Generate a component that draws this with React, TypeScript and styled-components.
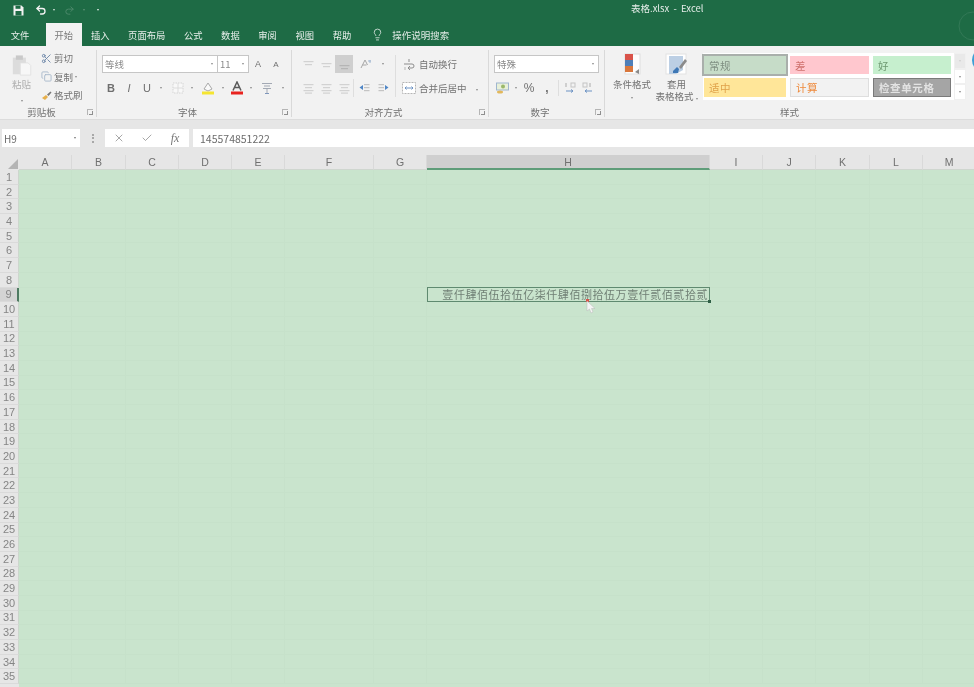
import * as React from 'react'
import styled, { createGlobalStyle } from 'styled-components'
import { Check, Copy, Lightbulb, Redo2, Scissors, Undo2, X } from 'lucide-react'

const GlobalStyle = createGlobalStyle`
  html, body { margin: 0; padding: 0; background: #c9e4cd; }
  body { font-family: "Noto Sans CJK SC", "Noto Sans", sans-serif; }
`

const Window = styled.div`
  position: relative;
  width: 974px;
  height: 687px;
  overflow: hidden;
  display: flex;
  flex-direction: column;
  background: #e6e6e6;
  filter: blur(0.5px);
  & > * { flex: none; }
`

const TitleBar = styled.div`
  height: 23px;
  display: flex;
  align-items: flex-start;
  padding-left: 12px;
  background: #1e6b45;
  color: #f0f0f0;
`
const QuickBtn = styled.span<{ $w: number; $faint?: boolean; $left?: number }>`
  width: ${p => p.$w}px;
  height: 16px;
  margin-top: 2px;
  margin-left: ${p => p.$left ?? 0}px;
  display: flex;
  align-items: center;
  justify-content: center;
  color: ${p => (p.$faint ? '#4f8a6c' : '#f2f2f2')};
`
const FileName = styled.span`
  margin-left: 522px;
  line-height: 16px;
  font-size: 9.5px;
  color: #e4ece8;
  white-space: pre;
`

const TabBar = styled.div`
  height: 23px;
  display: flex;
  align-items: stretch;
  padding-left: 1.5px;
  background: #1e6b45;
`
const Tab = styled.span<{ $active?: boolean; $left?: number }>`
  display: flex;
  align-items: center;
  padding: 0 ${p => (p.$active ? 8.5 : 9.3)}px;
  margin-left: ${p => p.$left ?? 0}px;
  font-size: 9.3px;
  color: ${p => (p.$active ? '#7b7b7b' : '#e8efeb')};
  background: ${p => (p.$active ? '#f2f2f2' : 'transparent')};
  white-space: nowrap;
`
const SearchHint = styled.span`
  display: flex;
  align-items: center;
  gap: 8.5px;
  margin-left: 10px;
  font-size: 9.5px;
  color: #dfe9e4;
`

const Ribbon = styled.div`
  height: 74px;
  display: flex;
  background: #f2f2f2;
  border-bottom: 1px solid #dcdcdc;
  box-sizing: border-box;
  color: #6f6f6f;
  font-size: 9.5px;
`
const Group = styled.div<{ $w: number; $last?: boolean }>`
  position: relative;
  width: ${p => p.$w}px;
  flex: none;
  display: flex;
  flex-direction: column;
  box-sizing: border-box;
  &::after {
    content: '';
    display: ${p => (p.$last ? 'none' : 'block')};
    position: absolute;
    right: 0;
    top: 4px;
    bottom: 2px;
    width: 1px;
    background: #d9d9d9;
  }
`
const GroupBody = styled.div<{ $pad?: number; $top?: number }>`
  flex: 1;
  display: flex;
  padding-left: ${p => p.$pad ?? 0}px;
  padding-top: ${p => p.$top ?? 9}px;
`
const GroupLabel = styled.div<{ $plain?: boolean }>`
  position: relative;
  height: 14px;
  line-height: 14px;
  padding-right: ${p => (p.$plain ? 0 : 14)}px;
  text-align: center;
  color: #737373;
  font-size: 9.5px;
`
const Launcher = styled.span`
  position: absolute;
  right: 4px;
  top: 4px;
  width: 6px;
  height: 6px;
  border-left: 1px solid #b5b5b5;
  border-top: 1px solid #b5b5b5;
  box-sizing: border-box;
  &::after {
    content: '';
    position: absolute;
    right: 0;
    bottom: 0;
    width: 3px;
    height: 3px;
    border-right: 1px solid #8f8f8f;
    border-bottom: 1px solid #8f8f8f;
  }
`
const Caret = styled.i<{ $color?: string }>`
  display: inline-block;
  width: 0;
  height: 0;
  border-left: 1.5px solid transparent;
  border-right: 1.5px solid transparent;
  border-top: 2px solid ${p => p.$color ?? '#8a8a8a'};
`

const PasteColumn = styled.div`
  width: 43px;
  display: flex;
  flex-direction: column;
  align-items: center;
  color: #b0b0b0;
  line-height: 12px;
`
const PasteLabel = styled.span`
  margin-top: 2px;
`
const PasteCaret = styled.span`
  margin-top: 6px;
  line-height: 4px;
`
const ClipList = styled.div`
  margin-top: -6px;
  margin-left: -2px;
  display: flex;
  flex-direction: column;
`
const ClipRow = styled.div`
  height: 18.5px;
  display: flex;
  align-items: center;
  gap: 2px;
  white-space: nowrap;
  color: #747474;
`
const ClipIcon = styled.span<{ $color: string }>`
  width: 11px;
  display: flex;
  justify-content: center;
  color: ${p => p.$color};
`

const Stack = styled.div<{ $gap?: number }>`
  display: flex;
  flex-direction: column;
  gap: ${p => p.$gap ?? 6}px;
`
const Row = styled.div`
  height: 18px;
  display: flex;
  align-items: center;
`
const Combo = styled.div<{ $w: number; $joined?: boolean }>`
  width: ${p => p.$w}px;
  height: 18px;
  box-sizing: border-box;
  display: flex;
  align-items: center;
  justify-content: space-between;
  padding: 0 4px 0 2px;
  background: #fff;
  border: 1px solid #c6c6c6;
  border-left-width: ${p => (p.$joined ? 0 : 1)}px;
  font-size: 9.5px;
  color: #8a8a8a;
`
const Cell = styled.span<{ $w: number; $tone?: string; $bg?: string; $bold?: boolean; $italic?: boolean; $size?: number }>`
  width: ${p => p.$w}px;
  height: 18px;
  flex: none;
  display: flex;
  align-items: center;
  justify-content: center;
  color: ${p => p.$tone ?? '#6f6f6f'};
  background: ${p => p.$bg ?? 'transparent'};
  font-family: "Liberation Sans", Arial, sans-serif;
  font-size: ${p => p.$size ?? 11}px;
  font-weight: ${p => (p.$bold ? 700 : 400)};
  font-style: ${p => (p.$italic ? 'italic' : 'normal')};
`
const Divider = styled.span<{ $h?: number; $ml?: number; $mr?: number }>`
  width: 1px;
  height: ${p => p.$h ?? 42}px;
  flex: none;
  margin-left: ${p => p.$ml ?? 0}px;
  margin-right: ${p => p.$mr ?? 0}px;
  background: #dedede;
`
const WrapRow = styled.div`
  height: 18px;
  display: flex;
  align-items: center;
  gap: 2px;
  white-space: nowrap;
  color: #737373;
`
const WrapIcon = styled.span`
  width: 16px;
  display: flex;
  justify-content: center;
`
const WrapCaret = styled.span`
  margin-left: 7px;
  line-height: 4px;
`

const BigButton = styled.div<{ $w: number }>`
  width: ${p => p.$w}px;
  margin-top: -2px;
  flex: none;
  display: flex;
  flex-direction: column;
  align-items: center;
  color: #737373;
  font-size: 9.5px;
  line-height: 12px;
  white-space: nowrap;
`
const BigIcon = styled.span`
  height: 23px;
  margin-bottom: 2px;
`
const BigCaret = styled.span`
  margin-top: 3px;
  line-height: 4px;
`
const Gallery = styled.div`
  width: 263px;
  height: 47px;
  margin-left: 4px;
  margin-top: -2px;
  flex: none;
  display: flex;
  background: #fff;
`
const StyleGrid = styled.div`
  display: grid;
  grid-template-columns: 82px 79px 78px;
  grid-template-rows: 18px 19px;
  column-gap: 4px;
  row-gap: 4px;
  padding: 3px 0 0 1px;
`
const StyleCell = styled.div<{ $bg: string; $fg: string; $edge?: string; $bold?: boolean }>`
  box-sizing: border-box;
  display: flex;
  align-items: center;
  padding-left: 5px;
  font-size: 10.5px;
  letter-spacing: 0.6px;
  background: ${p => p.$bg};
  color: ${p => p.$fg};
  font-weight: ${p => (p.$bold ? 700 : 400)};
  border: ${p => (p.$edge ? `1px solid ${p.$edge}` : 'none')};
`
const ActiveStyle = styled(StyleCell)`
  outline: 2px solid #a9afab;
  outline-offset: 0;
`
const Scroller = styled.div`
  width: 12px;
  margin-left: 3px;
  display: flex;
  flex-direction: column;
`
const ScrollBtn = styled.span<{ $off?: boolean }>`
  flex: 1;
  display: flex;
  align-items: center;
  justify-content: center;
  background: ${p => (p.$off ? '#e9e9e9' : '#fff')};
  border: 1px solid #f0f0f0;
`
const OfficeBadge = styled.span`
  position: absolute;
  left: 367px;
  top: 2px;
  width: 24px;
  height: 24px;
  border-radius: 50%;
  background: #3c9fd6;
`
const Watermark = styled.svg`
  position: absolute;
  right: 0;
  top: 4px;
  opacity: 0.25;
`

const FormulaBar = styled.div`
  height: 18px;
  margin-top: 9px;
  display: flex;
  align-items: stretch;
  padding-left: 2px;
`
const NameBox = styled.div`
  width: 78px;
  display: flex;
  align-items: center;
  justify-content: space-between;
  padding: 0 4px 0 2px;
  box-sizing: border-box;
  background: #fff;
  font-size: 10px;
  color: #6c6c6c;
`
const Dots = styled.span`
  width: 25px;
  display: flex;
  flex-direction: column;
  align-items: center;
  justify-content: center;
  gap: 1.5px;
  i {
    width: 2px;
    height: 2px;
    background: #a8a8a8;
  }
`
const FxBox = styled.div`
  width: 84px;
  display: flex;
  align-items: center;
  background: #fff;
  color: #a9a9a9;
`
const FxSlot = styled.span<{ $w: number }>`
  width: ${p => p.$w}px;
  display: flex;
  justify-content: center;
  font-family: "Liberation Serif", serif;
  font-style: italic;
  font-size: 12px;
  color: #777;
`
const FormulaInput = styled.div`
  flex: 1;
  margin-left: 4px;
  padding-left: 7px;
  display: flex;
  align-items: center;
  background: #fff;
  font-size: 10.5px;
  color: #6c6c6c;
`

const columns: [string, number][] = [
  ['A', 53], ['B', 54], ['C', 53], ['D', 53], ['E', 53], ['F', 89], ['G', 53],
  ['H', 283], ['I', 53], ['J', 53], ['K', 54], ['L', 53], ['M', 53],
]
const rowCount = 35

const Sheet = styled.div`
  margin-top: 8px;
  height: 532px;
  display: grid;
  grid-template-columns: 19px ${columns.map(c => `${c[1]}px`).join(' ')};
  grid-template-rows: 15px repeat(${rowCount}, 14.7px);
  align-content: start;
  background: linear-gradient(to right, #e6e6e6 19px, #c9e4cd 19px);
`
const Corner = styled.div`
  display: flex;
  align-items: flex-end;
  justify-content: flex-end;
  padding: 0 1px 1px 0;
  background: #e6e6e6;
  &::after {
    content: '';
    width: 0;
    height: 0;
    border-left: 10px solid transparent;
    border-bottom: 10px solid #b4b4b4;
  }
`
const ColHead = styled.div<{ $active?: boolean }>`
  display: flex;
  align-items: center;
  justify-content: center;
  box-sizing: border-box;
  font-family: "Liberation Sans", Arial, sans-serif;
  font-size: 10.5px;
  color: #707070;
  background: ${p => (p.$active ? '#cfcfcf' : '#e6e6e6')};
  border-right: 1px solid #d9d9d9;
  border-bottom: ${p => (p.$active ? '2px solid #5f9d79' : '1px solid #cfd6cf')};
`
const RowHead = styled.div<{ $active?: boolean }>`
  display: flex;
  align-items: center;
  justify-content: center;
  box-sizing: border-box;
  font-family: "Liberation Sans", Arial, sans-serif;
  font-size: 11px;
  color: #858585;
  background: ${p => (p.$active ? '#d4d4d4' : '#e6e6e6')};
  border-bottom: 1px solid #dadada;
  border-right: ${p => (p.$active ? '2px solid #4f7a62' : '1px solid #cdd6cd')};
`
const GridCell = styled.div`
  box-sizing: border-box;
  border-right: 1px solid #c6e1ca;
  border-bottom: 1px solid #c6e1ca;
`
const SelectedCell = styled.div`
  position: relative;
  margin: -1px 0 0;
  box-sizing: border-box;
  display: flex;
  align-items: center;
  justify-content: flex-end;
  padding-right: 1px;
  border: 1.5px solid #5f8a70;
  font-size: 11px;
  letter-spacing: 0.55px;
  color: #6f7f74;
  white-space: nowrap;
  z-index: 1;
  &::after {
    content: '';
    position: absolute;
    right: -2px;
    bottom: -2px;
    width: 3px;
    height: 3px;
    background: #2f5f45;
  }
`
const Pointer = styled.svg`
  position: absolute;
  left: 158px;
  top: 12px;
`
const PointerDot = styled.span`
  position: absolute;
  left: 158px;
  top: 11px;
  width: 3px;
  height: 3px;
  background: #d9534a;
`

const SaveIcon = () => (
  <svg width="11" height="11" viewBox="0 0 11 11">
    <path d="M0.5 0.5h8l2 2v8h-10z" fill="#f2f2f2" />
    <rect x="2.5" y="0.8" width="5" height="3" fill="#1e6b45" />
    <rect x="2.5" y="6" width="6" height="4.5" fill="#1e6b45" />
  </svg>
)
const PasteIcon = () => (
  <svg width="20" height="21" viewBox="0 0 22 24">
    <rect x="0.5" y="3" width="15" height="19" fill="#dcdcdc" />
    <rect x="4" y="0.5" width="8" height="5" fill="#c9c9c9" />
    <path d="M9 9h9l3 3v11H9z" fill="#f7f7f7" stroke="#e0e0e0" />
  </svg>
)
const BrushIcon = () => (
  <svg width="11" height="11" viewBox="0 0 11 11">
    <path d="M1 8l4-3 2 2-3 3z" fill="#e7b04c" />
    <path d="M6 4.5l3.5-3 1 1-3 3.5z" fill="#777" />
  </svg>
)
const Lines = ({ rows, tone = '#d2d2d2' }: { rows: number[]; tone?: string }) => (
  <svg width="11" height="11" viewBox="0 0 11 11">
    {rows.map((y, i) => (
      <rect key={i} x={i % 2 ? 2 : 0.5} y={y} width={i % 2 ? 7 : 10} height="1.2" fill={tone} />
    ))}
  </svg>
)
const IndentIcon = ({ flip }: { flip?: boolean }) => (
  <svg width="11" height="11" viewBox="0 0 11 11" style={flip ? { transform: 'scaleX(-1)' } : undefined}>
    <rect x="5" y="1" width="5.5" height="1.2" fill="#c4c4c4" />
    <rect x="5" y="4" width="5.5" height="1.2" fill="#c4c4c4" />
    <rect x="5" y="7" width="5.5" height="1.2" fill="#c4c4c4" />
    <path d="M4 2v5L0.5 4.5z" fill="#4f86c6" />
  </svg>
)
const BorderIcon = () => (
  <svg width="12" height="12" viewBox="0 0 12 12">
    <rect x="1" y="1" width="10" height="10" fill="#f8f8f8" stroke="#d4d4d4" strokeDasharray="1.5 1" />
    <path d="M6 1v10M1 6h10" stroke="#dcdcdc" />
  </svg>
)
const FillIcon = () => (
  <svg width="14" height="14" viewBox="0 0 14 14">
    <path d="M3 8l4-6 4 6-4 2z" fill="#fafafa" stroke="#a9a9a9" />
    <rect x="1" y="10.5" width="12" height="3" fill="#f5e531" />
  </svg>
)
const FontColorIcon = () => (
  <svg width="14" height="14" viewBox="0 0 14 14">
    <path d="M3 9.5L7 1l4 8.5M4.6 6.5h4.8" fill="none" stroke="#5a5a5a" strokeWidth="1.5" />
    <rect x="1" y="10.5" width="12" height="3" fill="#e8231f" />
  </svg>
)
const PhoneticIcon = () => (
  <svg width="12" height="13" viewBox="0 0 12 13">
    <path d="M1 1.5h10M3 4h6M2 6.5h8M6 6.5v5" stroke="#a3a9b4" fill="none" />
    <path d="M4 11.5h4" stroke="#7e96bb" />
  </svg>
)
const OrientIcon = () => (
  <svg width="12" height="12" viewBox="0 0 12 12">
    <path d="M1 10L5 2l2.5 5M2.5 7h4" fill="none" stroke="#a6a6a6" />
    <path d="M8 3l3 0M10 2v3" stroke="#9fb5cf" />
  </svg>
)
const WrapTextIcon = () => (
  <svg width="12" height="13" viewBox="0 0 12 13">
    <path d="M6 1v3M1 6h8a2 2 0 010 4H5M7 8l-2 2 2 2" fill="none" stroke="#8d8d8d" />
    <path d="M2 9v3" stroke="#b5b5b5" />
  </svg>
)
const MergeIcon = () => (
  <svg width="14" height="12" viewBox="0 0 14 12">
    <rect x="0.5" y="0.5" width="13" height="11" fill="#fff" stroke="#b5b5b5" strokeDasharray="2 1" />
    <path d="M3 6h8M9.5 4.5L11 6 9.5 7.5M4.5 4.5L3 6l1.5 1.5" stroke="#6d93c4" fill="none" />
  </svg>
)
const CurrencyIcon = () => (
  <svg width="14" height="12" viewBox="0 0 14 12">
    <rect x="0.5" y="1" width="12" height="7" fill="#e8f0d8" stroke="#9fb6cf" />
    <circle cx="7" cy="4.5" r="2" fill="#9ab86a" />
    <ellipse cx="4" cy="10" rx="3" ry="1.5" fill="#e2b85c" />
  </svg>
)
const DecimalIcon = ({ flip }: { flip?: boolean }) => (
  <svg width="12" height="12" viewBox="0 0 12 12">
    <rect x={flip ? 1 : 7} y="1" width="4" height="4" fill="none" stroke="#c4c4c4" />
    <rect x={flip ? 7 : 1} y="1" width="2" height="4" fill="#cfcfcf" />
    <path d={flip ? 'M10 9H3M5 7.5L3 9l2 1.5' : 'M2 9h7M7 7.5L9 9l-2 1.5'} fill="none" stroke="#6d93c4" />
  </svg>
)
const ConditionalIcon = () => (
  <svg width="20" height="24" viewBox="0 0 20 24">
    <rect x="3" y="1" width="15" height="20" fill="#fdfdfd" stroke="#dedede" />
    <rect x="3" y="1" width="8" height="6" fill="#d9534a" />
    <rect x="3" y="7" width="8" height="6" fill="#4f7fb8" />
    <rect x="3" y="13" width="8" height="6" fill="#d9773c" />
    <path d="M13 19l4-3v5z" fill="#8a8a8a" />
  </svg>
)
const TableIcon = () => (
  <svg width="24" height="24" viewBox="0 0 24 24">
    <rect x="1" y="1" width="20" height="20" fill="#fff" stroke="#e2e2e2" />
    <path d="M4 3h14v14l-7 4H4z" fill="#bccfe4" />
    <path d="M14 14l6-8 2 2-6 8z" fill="#8b8b8b" />
    <path d="M8 18l4-4 2 2-1 4H8z" fill="#3d77b5" />
  </svg>
)

export default function App() {
  return (
    <>
      <GlobalStyle />
      <Window>
        <TitleBar>
          <QuickBtn $w={12}><SaveIcon /></QuickBtn>
          <QuickBtn $w={21} $left={6}><Undo2 size={12} strokeWidth={2.6} /></QuickBtn>
          <QuickBtn $w={6}><Caret $color="#dbe7e1" /></QuickBtn>
          <QuickBtn $w={24} $faint><Redo2 size={11} strokeWidth={2} /></QuickBtn>
          <QuickBtn $w={6} $faint><Caret $color="#5f9378" /></QuickBtn>
          <QuickBtn $w={22}><Caret $color="#e8efeb" /></QuickBtn>
          <FileName>表格.xlsx  -  Excel</FileName>
          <Watermark width="22" height="40" viewBox="0 0 22 40">
            <circle cx="21" cy="22" r="14" fill="none" stroke="#6fa088" strokeWidth="1" />
          </Watermark>
        </TitleBar>
        <TabBar>
          <Tab>文件</Tab>
          <Tab $active $left={7.3}>开始</Tab>
          <Tab>插入</Tab>
          <Tab>页面布局</Tab>
          <Tab>公式</Tab>
          <Tab>数据</Tab>
          <Tab>审阅</Tab>
          <Tab>视图</Tab>
          <Tab>帮助</Tab>
          <SearchHint>
            <Lightbulb size={13} strokeWidth={1.5} />
            操作说明搜索
          </SearchHint>
        </TabBar>

        <Ribbon>
          <Group $w={97}>
            <GroupBody $top={9}>
              <PasteColumn>
                <PasteIcon />
                <PasteLabel>粘贴</PasteLabel>
                <PasteCaret><Caret /></PasteCaret>
              </PasteColumn>
              <ClipList>
                <ClipRow><ClipIcon $color="#6d87a8"><Scissors size={11} /></ClipIcon>剪切</ClipRow>
                <ClipRow><ClipIcon $color="#a9b9cc"><Copy size={11} /></ClipIcon>复制 <Caret /></ClipRow>
                <ClipRow><ClipIcon $color="#777"><BrushIcon /></ClipIcon>格式刷</ClipRow>
              </ClipList>
            </GroupBody>
            <GroupLabel>剪贴板<Launcher /></GroupLabel>
          </Group>

          <Group $w={195}>
            <GroupBody $pad={5}>
              <Stack>
                <Row>
                  <Combo $w={116}>等线<Caret /></Combo>
                  <Combo $w={31} $joined>11<Caret /></Combo>
                  <Cell $w={18} $size={9}>A</Cell>
                  <Cell $w={18} $size={8}>A</Cell>
                </Row>
                <Row>
                  <Cell $w={18} $bold>B</Cell>
                  <Cell $w={18} $italic>I</Cell>
                  <Cell $w={18}>U</Cell>
                  <Cell $w={10}><Caret /></Cell>
                  <Cell $w={23}><BorderIcon /></Cell>
                  <Cell $w={6}><Caret /></Cell>
                  <Cell $w={26}><FillIcon /></Cell>
                  <Cell $w={4}><Caret /></Cell>
                  <Cell $w={24}><FontColorIcon /></Cell>
                  <Cell $w={4}><Caret /></Cell>
                  <Cell $w={28}><PhoneticIcon /></Cell>
                  <Cell $w={4}><Caret /></Cell>
                </Row>
              </Stack>
            </GroupBody>
            <GroupLabel>字体<Launcher /></GroupLabel>
          </Group>

          <Group $w={197}>
            <GroupBody $pad={8}>
              <Stack>
                <Row>
                  <Cell $w={17}><Lines rows={[2, 5]} /></Cell>
                  <Cell $w={18}><Lines rows={[4, 7]} /></Cell>
                  <Cell $w={18} $bg="#cfcfcf"><Lines rows={[6, 9]} tone="#b5b5b5" /></Cell>
                  <Cell $w={26}><OrientIcon /></Cell>
                  <Cell $w={8}><Caret /></Cell>
                </Row>
                <Row>
                  <Cell $w={17}><Lines rows={[1, 4, 7, 9.5]} /></Cell>
                  <Cell $w={18}><Lines rows={[1, 4, 7, 9.5]} /></Cell>
                  <Cell $w={18}><Lines rows={[1, 4, 7, 9.5]} /></Cell>
                  <Divider $h={18} />
                  <Cell $w={20}><IndentIcon /></Cell>
                  <Cell $w={18}><IndentIcon flip /></Cell>
                </Row>
              </Stack>
              <Divider $ml={3} $mr={5} />
              <Stack>
                <WrapRow><WrapIcon><WrapTextIcon /></WrapIcon>自动换行</WrapRow>
                <WrapRow><WrapIcon><MergeIcon /></WrapIcon>合并后居中<WrapCaret><Caret /></WrapCaret></WrapRow>
              </Stack>
            </GroupBody>
            <GroupLabel>对齐方式<Launcher /></GroupLabel>
          </Group>

          <Group $w={116}>
            <GroupBody $pad={5}>
              <Stack>
                <Row><Combo $w={105}>特殊<Caret /></Combo></Row>
                <Row>
                  <Cell $w={18}><CurrencyIcon /></Cell>
                  <Cell $w={8}><Caret /></Cell>
                  <Cell $w={18} $size={12}>%</Cell>
                  <Cell $w={18} $size={12} $bold>,</Cell>
                  <Divider $h={16} $ml={2} $mr={2} />
                  <Cell $w={18}><DecimalIcon /></Cell>
                  <Cell $w={18}><DecimalIcon flip /></Cell>
                </Row>
              </Stack>
            </GroupBody>
            <GroupLabel>数字<Launcher /></GroupLabel>
          </Group>

          <Group $w={369} $last>
            <GroupBody $pad={5}>
              <BigButton $w={44}>
                <BigIcon><ConditionalIcon /></BigIcon>
                条件格式
                <BigCaret><Caret /></BigCaret>
              </BigButton>
              <BigButton $w={45}>
                <BigIcon><TableIcon /></BigIcon>
                套用
                <span>表格格式 <Caret /></span>
              </BigButton>
              <Gallery>
                <StyleGrid>
                  <ActiveStyle $bg="#c6dcc8" $fg="#7f8f82">常规</ActiveStyle>
                  <StyleCell $bg="#ffc7ce" $fg="#d0736f">差</StyleCell>
                  <StyleCell $bg="#c6efce" $fg="#6f9a72">好</StyleCell>
                  <StyleCell $bg="#ffe699" $fg="#e0a24a">适中</StyleCell>
                  <StyleCell $bg="#f2f2f2" $fg="#ee8a3c" $edge="#dedede">计算</StyleCell>
                  <StyleCell $bg="#a5a5a5" $fg="#e3e3e3" $edge="#7a7a7a" $bold>检查单元格</StyleCell>
                </StyleGrid>
                <Scroller>
                  <ScrollBtn $off><Caret $color="#cfcfcf" /></ScrollBtn>
                  <ScrollBtn><Caret /></ScrollBtn>
                  <ScrollBtn><Caret /></ScrollBtn>
                </Scroller>
              </Gallery>
            </GroupBody>
            <GroupLabel $plain>样式</GroupLabel>
            <OfficeBadge />
          </Group>
        </Ribbon>

        <FormulaBar>
          <NameBox>H9<Caret $color="#777" /></NameBox>
          <Dots><i /><i /><i /></Dots>
          <FxBox>
            <FxSlot $w={28}><X size={12} strokeWidth={1.3} /></FxSlot>
            <FxSlot $w={28}><Check size={12} strokeWidth={1.3} /></FxSlot>
            <FxSlot $w={28}>fx</FxSlot>
          </FxBox>
          <FormulaInput>145574851222</FormulaInput>
        </FormulaBar>

        <Sheet>
          <Corner />
          {columns.map(([name]) => (
            <ColHead key={name} $active={name === 'H'}>{name}</ColHead>
          ))}
          {Array.from({ length: rowCount }, (_, r) => (
            <React.Fragment key={r}>
              <RowHead $active={r === 8}>{r + 1}</RowHead>
              {columns.map(([name]) =>
                r === 8 && name === 'H' ? (
                  <SelectedCell key={name}>
                    壹仟肆佰伍拾伍亿柒仟肆佰捌拾伍万壹仟贰佰贰拾贰
                    <PointerDot />
                    <Pointer width="10" height="14" viewBox="0 0 10 14">
                      <path d="M1 1v10l2.5-2 1.5 4 2-1-1.5-3.5H9z" fill="#f5f5f5" stroke="#b8b8b8" strokeWidth="0.5" />
                    </Pointer>
                  </SelectedCell>
                ) : (
                  <GridCell key={name} />
                )
              )}
            </React.Fragment>
          ))}
        </Sheet>
      </Window>
    </>
  )
}
